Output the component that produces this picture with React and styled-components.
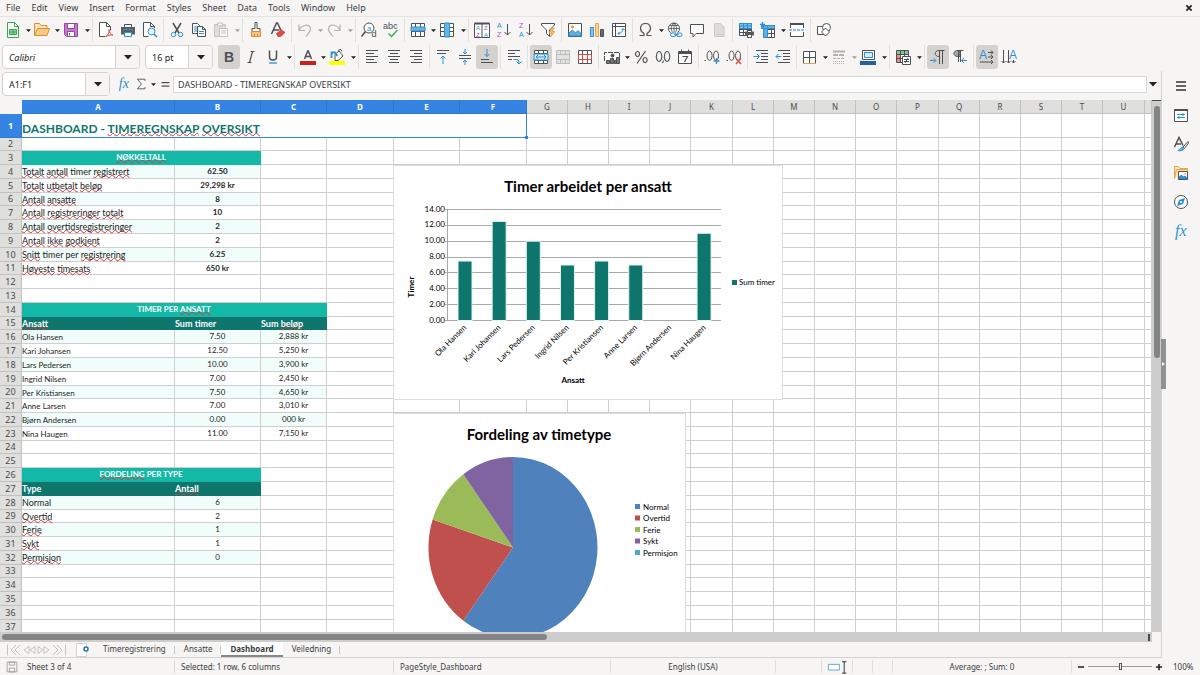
import React from 'react';
import styled, { css, createGlobalStyle } from 'styled-components';

const c = {
  chrome: '#f6f5f4',
  line: '#d5d2cf',
  text: '#3a3d3f',
  ink: '#4d5054',
  blue: '#3584e4',
  sky: '#2f8fd0',
  orange: '#eba34a',
  red: '#dd4a45',
  green: '#3aa757',
  purple: '#b44ac0',
  grid: '#cfcfcf',
  teal: '#0f766e',
  tealLight: '#14b8a6',
  mint: '#f0fdfa',
};

const ui = `'Noto Sans', 'Open Sans', sans-serif`;
const cellFont = `Lato, 'Noto Sans', sans-serif`;

const GlobalStyle = createGlobalStyle`
  * { box-sizing: border-box; }
  body {
    margin: 0;
    font-family: ${ui};
    font-size: 9px;
    color: ${c.text};
    background: ${c.chrome};
    overflow: hidden;
  }
  button, input {
    font: inherit;
    color: inherit;
    margin: 0;
    padding: 0;
    border: none;
    background: none;
  }
`;

const Window = styled.div`
  display: flex;
  flex-direction: column;
  height: 100vh;
`;

const MenuBar = styled.nav`
  display: flex;
  align-items: center;
  gap: 11px;
  height: 17px;
  flex: none;
  padding: 0 4px 0 6px;
  border-bottom: 1px solid #e6e4e2;
`;

const MenuItem = styled.button`
  line-height: 14px;
`;

const CloseButton = styled.button`
  display: flex;
  margin-left: auto;
`;

const Toolbar = styled.div`
  display: flex;
  align-items: center;
  height: 27px;
  flex: none;
  padding: 0 0 1px 2px;
`;

const Group = styled.div`
  display: flex;
  align-items: center;
  height: 24px;
  &:not(:last-child) {
    border-right: 1px solid #e3e1de;
    padding-right: 2px;
    margin-right: 2px;
  }
`;

const Tool = styled.button`
  display: flex;
  align-items: center;
  justify-content: center;
  width: 22px;
  height: 24px;
  border-radius: 3px;
  background: ${p => (p.$on ? '#d5d1cd' : 'transparent')};
  opacity: ${p => (p.$off ? 0.4 : 1)};
`;

const Drop = styled.button`
  display: flex;
  align-items: center;
  justify-content: flex-end;
  width: 7px;
  height: 24px;
  opacity: ${p => (p.$off ? 0.4 : 1)};
  &:last-child {
    width: 8px;
  }
`;

const Combo = styled.div`
  display: flex;
  width: ${p => p.$w}px;
  height: 24px;
  flex: none;
  margin-right: 5px;
  border: 1px solid ${c.line};
  border-radius: 4px;
  background: #fff;
  overflow: hidden;
`;

const ComboInput = styled.input`
  flex: 1;
  min-width: 0;
  padding-left: 6px;
  color: #222;
  font-style: ${p => (p.$italic ? 'italic' : 'normal')};
`;

const ComboButton = styled.button`
  display: flex;
  align-items: center;
  justify-content: center;
  width: 24px;
  border-left: 1px solid ${c.line};
  background: ${c.chrome};
`;

const Middle = styled.div`
  display: flex;
  flex: 1;
  min-height: 0;
`;

const Work = styled.main`
  display: flex;
  flex-direction: column;
  flex: 1;
  min-width: 0;
`;

const FormulaBar = styled.div`
  display: flex;
  align-items: center;
  height: 29px;
  flex: none;
  padding: 0 4px 3px 2px;
`;

const FormulaTool = styled(Tool)`
  width: 17px;
`;

const FormulaInput = styled.input`
  flex: 1;
  min-width: 0;
  height: 17px;
  padding-left: 4px;
  border: 1px solid #d8d6d4;
  background: #fff;
`;

const FormulaDrop = styled(Drop)`
  &&& {
    width: 10px;
  }
`;

const SheetArea = styled.div`
  display: flex;
  flex: 1;
  min-height: 0;
`;

const SheetView = styled.div`
  position: relative;
  flex: 1;
  min-width: 0;
  overflow: hidden;
  background: #fff;
`;

const Sheet = styled.table`
  width: 100%;
  table-layout: fixed;
  border-collapse: separate;
  border-spacing: 0;
  font-family: ${cellFont};
  font-size: 8px;
  color: #1c1c1c;
`;

const ColHead = styled.th`
  height: 14px;
  padding: 0;
  font: ${p => (p.$on ? 'bold' : 'normal')} 8px/13px ${ui};
  color: ${p => (p.$on ? '#fff' : '#4a4a4a')};
  background: ${p => (p.$on ? c.blue : '#dfdfde')};
  border-right: 1px solid ${p => (p.$on ? '#2f76cd' : '#c2c2c2')};
  border-bottom: 1px solid ${p => (p.$on ? '#2f76cd' : '#c2c2c2')};
`;

const Corner = styled.td`
  padding: 0;
  background: ${c.chrome};
`;

const RowHead = styled(ColHead)`
  height: auto;
  font-size: 9px;
  line-height: 12px;
`;

const Cell = styled.td`
  padding: 0;
  border-right: 1px solid ${c.grid};
  border-bottom: 1px solid ${c.grid};
  vertical-align: top;
  white-space: nowrap;
  ${p => p.$alt && css`
    background: ${c.mint};
  `}
  ${p => p.$head && css`
    color: #fff;
    font-weight: bold;
    background: ${p.$head};
    border-color: ${p.$head};
  `}
  ${p => p.$active && css`
    border-color: ${c.blue};
    vertical-align: bottom;
  `}
`;

const CellText = styled.div`
  height: 12px;
  line-height: ${p => (p.$center ? 12 : 14)}px;
  text-align: ${p => (p.$center ? 'center' : 'left')};
  font-size: ${p => (p.$large ? 9 : 8)}px;
  font-weight: ${p => (p.$bold ? 'bold' : 'inherit')};
`;

const SheetTitle = styled.div`
  line-height: 17px;
  font-size: 12px;
  font-weight: bold;
  color: ${c.teal};
`;

const Typo = styled.span`
  text-decoration: underline wavy #d8343a 1px;
  text-decoration-skip-ink: none;
  text-underline-offset: -1px;
`;

const FillHandle = styled.span`
  position: absolute;
  top: 36px;
  left: 525px;
  width: 3px;
  height: 3px;
  background: ${c.blue};
`;

const ChartFrame = styled.figure`
  position: absolute;
  left: 393px;
  top: ${p => p.$top}px;
  margin: 0;
  border: 1px solid #dcdcdc;
  background: #fff;
  svg {
    display: block;
    font-family: ${cellFont};
    font-size: 8px;
  }
`;

const VScroll = styled.div`
  width: 9px;
  flex: none;
  padding: 5px 1px 0 2px;
  border-top: 1px solid #4a4a4a;
  background: #cdcdcd;
`;

const VThumb = styled.div`
  height: 48%;
  border-radius: 3px;
  background: #838584;
`;

const HScroll = styled.div`
  height: 10px;
  flex: none;
  margin-right: 9px;
  padding: 2px 0 2px 2px;
  background: #cdcdcd linear-gradient(#4a4a4a, #4a4a4a) right 2px center / 2px 7px no-repeat;
`;

const HThumb = styled(VThumb)`
  width: calc(47% + 4px);
  height: 6px;
`;

const Tabs = styled.div`
  display: flex;
  align-items: stretch;
  height: 16px;
  flex: none;
  padding-left: 6px;
  border-bottom: 1px solid ${c.line};
`;

const TabNav = styled.button`
  display: flex;
  align-items: center;
  width: 15px;
  color: #c6c4c1;
`;

const AddTab = styled.button`
  display: flex;
  align-items: center;
  margin: 0 4px 0 8px;
`;

const Tab = styled.button`
  position: relative;
  padding: 0 9px;
  line-height: 13px;
  font-size: 8px;
  ${p => p.$on ? css`
    font-weight: bold;
    background: #fff;
    border-bottom: 2px solid #85888a;
  ` : css`
    border-bottom: 2px solid transparent;
    background: linear-gradient(#c9c6c3, #c9c6c3) right 4px / 1px 8px no-repeat;
  `}
`;

const Sidebar = styled.aside`
  position: relative;
  display: flex;
  flex-direction: column;
  align-items: center;
  width: 39px;
  flex: none;
  border-left: 1px solid ${c.line};
`;

const SideButton = styled(Tool)`
  height: 29px;
`;

const SideHandle = styled.button`
  position: absolute;
  left: -1px;
  top: 268px;
  display: flex;
  align-items: center;
  width: 5px;
  height: 50px;
  background: #929292;
`;

const StatusBar = styled.footer`
  display: grid;
  grid-template-columns: 24px 150fr 219fr 217fr 165fr 46fr 31px 20px 20px 179fr 129px;
  align-items: center;
  height: 17px;
  flex: none;
`;

const StatusCell = styled.div`
  display: flex;
  align-items: center;
  justify-content: ${p => (p.$center ? 'center' : 'flex-start')};
  height: 13px;
  padding-left: ${p => p.$pad || 0}px;
  border-left: ${p => (p.$bare ? 'none' : '1px solid #e0dedb')};
  font-size: 8px;
  white-space: nowrap;
`;

const ZoomSlider = styled.input.attrs({ type: 'range' })`
  appearance: none;
  flex: 1;
  min-width: 0;
  height: 9px;
  margin: 0 2px;
  background: linear-gradient(#9a9a9a, #9a9a9a) center / 100% 1px no-repeat;
  &::-webkit-slider-thumb {
    appearance: none;
    width: 3px;
    height: 7px;
    border: 1px solid #55585a;
    background: #eee;
  }
`;

const ZoomValue = styled.span`
  width: 36px;
  padding-left: 9px;
`;

const Svg = styled.svg`
  display: block;
  flex: none;
  overflow: visible;
`;

const k = c.ink;
const s = c.sky;

const lines = (rows, color = k) =>
  rows.map(([x1, x2, y]) => <path key={y} d={`M${x1} ${y}H${x2}`} stroke={color} />);

const Letter = ({ x, y, size = 8, fill = s, children, ...rest }) => (
  <text x={x} y={y} fontSize={size} fill={fill} stroke="none" fontFamily="'Liberation Sans', sans-serif" {...rest}>
    {children}
  </text>
);

const gridLines = 'M1.5 1.5h13v13h-13zM1.5 5.5h13M1.5 9.5h13M5.5 1.5v13M10.5 1.5v13';

const icons = {
  new: (
    <g stroke={c.green}>
      <path d="M2.500 .5h7l4 4v11h-11z" fill="#fff" />
      <path d="M9.500.5v4h4" />
      <path d="M4.500 7.500h7v5h-7z" fill="#8fd19e" />
      <path d="M4.500 10h7M8 7.500v5" />
    </g>
  ),
  open: (
    <g stroke="#d98f33">
      <path d="M.5 13.500v-12h5l1.500 2h6v3" fill="#fbe3bd" />
      <path d="M.5 13.500l3-7h12l-2.500 7z" fill="#fac983" />
    </g>
  ),
  save: (
    <g stroke="#93489b">
      <path d="M1.500 1.500h13v13h-11l-2-2z" fill="#c678cf" />
      <path d="M4.500 1.500h7v5h-7z" fill="#fff" />
      <path d="M4.500 9.500h7v5h-7z" fill="#fff" />
      <path d="M6.500 11v2.500" />
    </g>
  ),
  pdf: (
    <g stroke={k}>
      <path d="M12.500 8.500V4.500l-4-4h-7v14h6" fill="#fff" />
      <path d="M8.500.5v4h4" />
      <path d="M8 14.500c2.500-2 3.500-4.500 3-7 .5 3.500 1.500 5 4 5.500-3-.3-5 .3-7 1.500z" stroke={c.red} />
    </g>
  ),
  print: (
    <g stroke={k}>
      <path d="M4.500 5V2.500h7V5" fill="#fff" />
      <path d="M1 5h14v7.500H1z" fill="#5a5d61" stroke="none" />
      <path d="M3 7.500h10" stroke={s} />
      <path d="M4.500 10.500h7v4h-7z" fill="#fff" stroke={s} />
    </g>
  ),
  preview: (
    <g stroke={k}>
      <path d="M12.500 6V4.500l-4-4h-7v14h5" fill="#fff" />
      <path d="M8.500.5v4h4" />
      <circle cx="9.500" cy="9.500" r="3.500" stroke={s} fill="#e6f3fb" />
      <path d="M12 12l3 3" stroke={s} strokeWidth="1.500" />
    </g>
  ),
  cut: (
    <g stroke={k}>
      <path d="M4 1l6 10M12 1L6 11" strokeWidth="1.500" />
      <circle cx="4.500" cy="12.500" r="2.200" stroke={s} />
      <circle cx="11.500" cy="12.500" r="2.200" stroke={s} />
    </g>
  ),
  copy: (
    <g stroke={k}>
      <path d="M1.500 1.500h5l2 2v8h-7z" fill="#fff" />
      <path d="M6.500 4.500h5l3 3v7h-8z" fill="#fff" />
      <path d="M11.500 4.500v3h3" />
      <path d="M3 5h3M3 7h3M3 9h3M8 9.500h5M8 11.500h5" stroke={s} />
    </g>
  ),
  paste: (
    <g stroke="#77797b">
      <path d="M1.500 2.500h11v12h-11z" fill="#bbb" />
      <path d="M4.500 1h5v3h-5z" fill="#eee" />
      <path d="M6.500 6.500h8v8h-8z" fill="#fff" />
      <path d="M8 9h5M8 11h5" />
    </g>
  ),
  clone: (
    <g stroke={k}>
      <path d="M7 .5h2v6h3v3H4v-3h3z" fill="#fff" />
      <path d="M3.500 9.500h9v5h-9z" fill="#fbc27a" stroke="#dd8f34" />
      <path d="M6.500 12v2.500M9.500 12v2.500" stroke="#dd8f34" />
    </g>
  ),
  clear: (
    <g stroke={k}>
      <path d="M1.500 12L6.500 1h1l3.500 7.500M3.500 8h6" strokeWidth="1.500" />
      <path d="M6.500 11.500l5-3.500 3.500 2.500-4.500 4H8z" fill={c.red} stroke={c.red} />
    </g>
  ),
  undo: <path d="M2 2.500v6h6M2 8.500C4 2.500 13.500 1 13.500 7c0 3-2.500 5-4.500 7.500" stroke={k} strokeWidth="1.200" />,
  redo: <path d="M14 2.500v6H8M14 8.500C12 2.500 2.500 1 2.500 7c0 3 2.500 5 4.500 7.500" stroke={k} strokeWidth="1.200" />,
  find: (
    <g stroke={k}>
      <circle cx="8" cy="6" r="5" fill="#fff" />
      <path d="M4.500 9.500L.5 14.500" strokeWidth="1.500" />
      <Letter x="6" y="8.500" size={8}>a</Letter>
      <Letter x="10.500" y="15" size={9} fill={k}>d</Letter>
    </g>
  ),
  spell: (
    <g>
      <Letter x="0" y="7" size={9} fill={k}>abc</Letter>
      <path d="M5.500 11.500l3 3 6-6.500" stroke={c.green} strokeWidth="1.300" />
    </g>
  ),
  row: (
    <g stroke={k}>
      <path d={gridLines} fill="#fff" />
      <path d="M1 5h14v4H1z" fill="#66b4e4" stroke={s} />
    </g>
  ),
  column: (
    <g stroke={k}>
      <path d={gridLines} fill="#fff" />
      <path d="M5.500 1h5v14h-5z" fill="#66b4e4" stroke={s} />
    </g>
  ),
  sort: (
    <g stroke={k}>
      <path d="M.5 1.500h15v14H.5zM8 1.500v14" fill="#fff" />
      <path d="M.5 1.500h15" strokeWidth="2" />
      <Letter x="2" y="8" size={6}>A</Letter>
      <Letter x="2" y="15" size={6} fill={c.purple}>Z</Letter>
      <Letter x="10" y="8" size={6} fill={c.purple}>Z</Letter>
      <Letter x="10" y="15" size={6}>A</Letter>
    </g>
  ),
  asc: (
    <g stroke={k}>
      <Letter x="1" y="6" size={7}>A</Letter>
      <Letter x="1" y="15" size={7} fill={c.purple}>Z</Letter>
      <path d="M11.500 2v11M8.500 10l3 3 3-3" />
    </g>
  ),
  desc: (
    <g stroke={k}>
      <Letter x="1" y="6" size={7} fill={c.purple}>Z</Letter>
      <Letter x="1" y="15" size={7}>A</Letter>
      <path d="M11.500 2v11M8.500 10l3 3 3-3" />
    </g>
  ),
  filter: (
    <g stroke={k}>
      <path d="M1.500 1.500h13v1.500L9.500 8v6.500l-3-3V8l-5-5z" fill="#fff" />
      <path d="M12 6l-3 5h3l-1.500 4 4-5.500h-2.500L14 6z" fill="#fbc27a" stroke={c.orange} />
    </g>
  ),
  image: (
    <g stroke={k}>
      <path d="M1.500 1.500h13v13h-13z" fill="#fff" />
      <path d="M2 14v-3l3.500-3 3 3 2.500-2.500 3 3V14z" fill="#5fb0e2" stroke={s} />
      <circle cx="5.500" cy="5" r="1.200" fill={c.orange} stroke={c.orange} />
    </g>
  ),
  chart: (
    <g>
      <path d="M1.500 5.500h3v9h-3z" fill="#8dc6ec" stroke={s} />
      <path d="M6.500 1.500h3v13h-3z" fill="#fbd49b" stroke={c.orange} />
      <path d="M11.500 7.500h3v7h-3z" fill="#66696c" stroke={k} />
    </g>
  ),
  pivot: (
    <g stroke={k}>
      <path d="M1.500 1.500h13v13h-13zM1.500 4.500h13M4.500 1.500v13" fill="#fff" />
      <path d="M7 11.500c3 0 5-2 5-5M10.500 8L12 6.500 13.500 8M8.500 10L7 11.500 8.500 13" stroke={s} />
    </g>
  ),
  omega: <path d="M1.500 13.500h4.500v-2C3.500 10 2.500 8 2.500 6.500c0-3 2-5 5-5s5 2 5 5c0 1.500-1 3.500-3.500 5v2h4.500" stroke={k} strokeWidth="1.200" />,
  link: (
    <g stroke={k}>
      <circle cx="7" cy="6.500" r="5.500" fill="#fff" />
      <path d="M1.500 6.500h11M7 1v11M3 3.500h8M7 1C3.500 4 3.500 9 7 12M7 1c3.500 3 3.500 8 0 11" strokeWidth=".8" />
      <path d="M3.500 10.500h12v5h-12z" fill={c.chrome} stroke="none" />
      <rect x="3.500" y="11" width="5.500" height="3.500" rx="1.700" stroke={s} />
      <rect x="9.500" y="11" width="5.500" height="3.500" rx="1.700" stroke={s} />
      <path d="M7 12.700h5" stroke={s} />
    </g>
  ),
  comment: <path d="M1.500 2.500h13v9H7l-3 3.500v-3.500H1.500z" fill="#fff" stroke={k} />,
  footer: (
    <g stroke="#8a8c8e">
      <path d="M3.500 1.500h6l3.500 3.500v9.500H3.500z" fill="#b8b8b8" />
      <path d="M5 12.500h6" />
    </g>
  ),
  printArea: (
    <g stroke={k}>
      <path d="M1.500 1.500h12v12h-12zM1.500 7.500h12M1.500 10.500h12M5.500 1.500v12M9.500 1.500v12" fill="#fff" />
      <path d="M1.500 1.500h12v5h-12zM5.500 1.500v5M9.500 1.500v5M1.500 4h12" fill="#7cc0ea" stroke={s} />
      <path d="M7 9.500h9v4H7z" fill="#5a5d61" stroke="none" />
      <path d="M9.500 8.500h4v2h-4zM9.500 12.500h4v3h-4z" fill="#fff" />
    </g>
  ),
  freeze: (
    <g stroke={k}>
      <path d="M3.500 3.500h11v12h-11zM3.500 7.500h11M3.500 11.500h11M7.500 3.500v12M11.500 3.500v12" fill="#fff" />
      <path d="M1.500 3.500h13v3h-13zM3.500 3.500h4v12h-4z" fill="#5fb0e2" stroke={s} />
      <path d="M2.500 0v5M0 2.500h5" stroke={s} strokeWidth="1.500" />
    </g>
  ),
  split: (
    <g stroke={k}>
      <path d="M1.500 6V1.500h13V6M1.500 10v4.500h13V10" fill="#fff" />
      <path d="M1 2h14" strokeWidth="2" />
      <path d="M0 8h16" stroke={s} strokeDasharray="3 1" />
    </g>
  ),
  draw: (
    <g stroke={k}>
      <path d="M1.500 4.500h8v8h-8z" fill="#fff" />
      <circle cx="10.500" cy="5.500" r="4" fill="#fff" />
      <path d="M9.500 6l4 4-4 4-4-4z" fill="#fff" />
    </g>
  ),
  bold: <Letter x="3" y="13" size={14} fill={k} fontWeight="bold">B</Letter>,
  italic: <path d="M7.500 2.500h4M4.500 13.500h4M9.500 2.500L6.500 13.500" stroke={k} strokeWidth="1.200" />,
  underline: (
    <g stroke={k}>
      <path d="M4.500 1.500V8c0 4 7 4 7 0V1.500" strokeWidth="1.500" />
      <path d="M4 14h8" stroke={s} strokeWidth="1.300" />
    </g>
  ),
  fontColor: (
    <g>
      <path d="M4.500 10L7.700 2h.6L11.500 10M5.500 7.500h5" stroke={k} strokeWidth="1.500" />
      <path d="M0 12h16v4H0z" fill="#c9211e" />
    </g>
  ),
  highlight: (
    <g>
      <path d="M6 5.500L10 2l4 5-5 4.500H6z" fill="#fff" stroke={k} />
      <path d="M2.500 9V3.500H6L8.500 7" stroke={s} strokeWidth="1.800" />
      <path d="M9 1.500l3-1 1 2" stroke={k} />
      <path d="M0 12h16v4H0z" fill="#ffff00" />
    </g>
  ),
  left: lines([[2, 14, 1.5], [2, 10, 4.5], [2, 14, 7.5], [2, 10, 10.5], [2, 13, 13.5]]),
  center: lines([[2, 14, 1.5], [4, 12, 4.5], [2, 14, 7.5], [4, 12, 10.5], [3, 13, 13.5]]),
  right: lines([[2, 14, 1.5], [6, 14, 4.5], [2, 14, 7.5], [6, 14, 10.5], [3, 14, 13.5]]),
  top: (
    <g>
      {lines([[2, 14, 1.5], [2, 11, 4.5]])}
      <path d="M8 15V7M5.500 9.500L8 7l2.500 2.500" stroke={s} />
    </g>
  ),
  middle: (
    <g>
      {lines([[2, 14, 6.5], [2, 14, 9.5]])}
      <path d="M8 0v4.500M6 3l2 2 2-2M8 16v-4.500M6 13l2-2 2 2" stroke={s} />
    </g>
  ),
  bottom: (
    <g>
      {lines([[2, 10, 10.5], [2, 14, 13.5]])}
      <path d="M8 0v7.500M5.500 5L8 7.500 10.500 5" stroke={s} />
    </g>
  ),
  wrap: (
    <g>
      {lines([[2, 14, 1.5], [2, 9, 4.5], [2, 14, 7.5], [2, 6, 10.5]])}
      <path d="M7.500 10.500h3.500c2 0 2 3 2 4M10.500 12.500l2.500 2.500 2.500-2.500" stroke={s} />
    </g>
  ),
  merge: (
    <g stroke={k}>
      <path d="M1.500 1.500h13v13h-13zM1.500 4.500h13M1.500 11.500h13M5.500 1.500v3M10.500 1.500v3M5.500 11.500v3M10.500 11.500v3" fill="#fff" />
      <path d="M1 5h14v6H1z" fill="#d7ecf9" stroke={s} />
      <path d="M3 8h10M5 6L3 8l2 2M11 6l2 2-2 2" stroke={s} />
    </g>
  ),
  unmerge: (
    <g stroke="#6a6c6e">
      <path d="M1.500 1.500h13v13h-13zM1.500 5.500h13M1.500 10.500h13M5.500 1.500v4M10.500 1.500v4M5.500 10.500v4M10.500 10.500v4" fill="#c4c4c4" />
    </g>
  ),
  splitCells: (
    <g stroke={k}>
      <path d="M1.500 1.500h13v13h-13zM5.500 1.500v13M10.500 1.500v13" fill="#fff" />
      <path d="M1.500 5.500h13v5h-13zM5.500 5.500v5M10.500 5.500v5M5.500 11v3M10.500 11v3" stroke={c.red} />
    </g>
  ),
  currency: (
    <g stroke={k}>
      <path d="M.5 12V3.500h15v5" fill="#fff" strokeDasharray="5 1" />
      <circle cx="8.500" cy="6.500" r="1.500" fill={k} />
      <path d="M2.500 11.500h3v3h-3zM6.500 9.500h3v5h-3zM10.500 11.500h2v3h-2zM12.500 8.500h3v6h-3z" fill="#77797b" />
    </g>
  ),
  percent: <path d="M12.500 2L4 14.500M4.500 2.500a2 2.500 0 1 0 .1 0zM12 8.500a2 2.500 0 1 0 .1 0z" stroke={k} strokeWidth="1.200" />,
  number: <path d="M4 2.500a2.700 5 0 1 0 .1 0zM12 2.500a2.700 5 0 1 0 .1 0zM8.500 11.500l-1 2.500" stroke={k} strokeWidth="1.100" />,
  date: (
    <g stroke={k}>
      <path d="M1.500 2.500h13v12h-13z" fill="#fff" />
      <path d="M1.500 4h13" strokeWidth="2" />
      <path d="M4.500.5v3M11.500.5v3" />
      <path d="M5.500 7.500h5L7.500 13" strokeWidth="1.200" />
    </g>
  ),
  addDecimal: (
    <g stroke={k}>
      <path d="M.5 11.500h1.500M5.500 2a2.500 4.700 0 1 0 .1 0zM12 2a2.500 4.700 0 1 0 .1 0z" />
      <path d="M12.500 9v6M9.500 12h6" stroke={s} strokeWidth="1.300" />
    </g>
  ),
  delDecimal: (
    <g stroke={k}>
      <path d="M.5 11.500h1.500M5.500 2a2.500 4.700 0 1 0 .1 0zM12 2a2.500 4.700 0 1 0 .1 0z" />
      <path d="M10 9.500l5 5.500M15 9.500L10 15" stroke={c.red} strokeWidth="1.300" />
    </g>
  ),
  indent: (
    <g>
      {lines([[3, 15, 1.5], [8, 15, 4.5], [8, 15, 7.5], [8, 15, 10.5], [3, 15, 13.5]])}
      <path d="M.5 7.500h5.500M4 5l2.500 2.500L4 10" stroke={s} />
    </g>
  ),
  outdent: (
    <g>
      {lines([[3, 15, 1.5], [8, 15, 4.5], [8, 15, 7.5], [8, 15, 10.5], [3, 15, 13.5]])}
      <path d="M6.500 7.500H1M3.500 5L1 7.500 3.500 10" stroke={s} />
    </g>
  ),
  border: (
    <g stroke={k}>
      <path d="M1.500 2.500h12v12h-12zM7.500 2.500v12M1.500 8.500h12" fill="#fff" />
      <path d="M1 14.500h13" stroke={c.orange} />
    </g>
  ),
  lineStyle: (
    <g stroke={k}>
      <path d="M2 2.500h12" strokeWidth="2" />
      <path d="M2 6h12" strokeWidth="2" strokeDasharray="5 1" />
      <path d="M2 9.500h12" strokeDasharray="3 1" />
      <path d="M2 12.500h12M2 14.500h12" strokeDasharray="1 1" />
    </g>
  ),
  borderColor: (
    <g>
      <path d="M2.500 1.500h12v9h-12z" fill="#fff" stroke={k} />
      <path d="M4.500 3.500h8v5h-8z" stroke={s} fill="#d7ecf9" />
      <path d="M0 12h16v4H0z" fill="#2a6099" />
    </g>
  ),
  conditional: (
    <g stroke={k}>
      <path d="M1.500 1.500h12v12h-12z" fill="#fff" />
      <path d="M2 2h11v3H2z" fill="#7fca8e" stroke="none" />
      <path d="M2 6h4v7H2z" fill="#ee8b86" stroke="none" />
      <path d="M1.500 5.500h12M1.500 9.500h12M5.500 1.500v12M9.500 1.500v12" />
      <path d="M7.500 7.500h8v8h-8z" fill="#fff" />
      <path d="M9 10.500h5M9 12.500h5M13 9l-3 5" />
    </g>
  ),
  ltr: (
    <g stroke={k}>
      <path d="M9.500 15V1.500M12.500 15V1.500M14.500 1.500H9c-5 0-5 6 0 6" />
      <path d="M0 11.500h5.500M3.500 9L6 11.500 3.500 14" stroke={s} />
    </g>
  ),
  rtl: (
    <g stroke={k}>
      <path d="M6 1.500c-5.500 0-5.500 6 0 6h2v-6z" fill="#aaa" />
      <path d="M6.500 13V1.500M8.500 13V1.500M11.500 1.500H6" />
      <path d="M15 11.500H9.500M12 9L9.500 11.500 12 14" stroke={s} />
    </g>
  ),
  horizontal: (
    <g stroke={k}>
      <Letter x="0" y="10" size={12}>A</Letter>
      <path d="M9 3.500h5M12 1.500l2 2-2 2M9 8h5M12 6l2 2-2 2M1 13h13M12 11l2 2-2 2" />
    </g>
  ),
  vertical: (
    <g stroke={k}>
      <Letter x="8" y="10" size={12}>A</Letter>
      <path d="M2.500 1v13M.5 12l2 2 2-2M7.500 1v13M5.500 12l2 2 2-2M12.500 11v3M10.500 12l2 2 2-2" />
    </g>
  ),
  menu: <path d="M3 4h10M3 8h10M3 12h10" stroke="#333" strokeWidth="1.500" />,
  properties: (
    <g stroke={k}>
      <path d="M1.500 2.500h13v12h-13z" fill="#fff" />
      <path d="M1 3h14" strokeWidth="2" />
      <path d="M4 7.500h8M10 6v3M4 10.500h8M6 9v3" stroke={s} />
    </g>
  ),
  styles: (
    <g>
      <path d="M1.500 11L6 1.500l4 8M3 8h5" stroke={k} strokeWidth="1.500" />
      <path d="M15 5.500l-5 5.500 1.500 1.500L15.500 7z" fill="#fff" stroke={k} />
      <path d="M5 14.500c2 .5 5 .5 6-2l-1.500-1.500C7.500 11.500 8 13.500 5 14.500z" fill="#5fb0e2" stroke={s} />
    </g>
  ),
  gallery: (
    <g>
      <path d="M1.500 13.500v-12h4l1.500 2h7.500v3" stroke={c.orange} fill="#fbe3bd" />
      <path d="M1.500 13.500l2-9h11" stroke={c.orange} />
      <path d="M5.500 6.500h9v8h-9z" fill="#fff" stroke={k} />
      <path d="M6 14v-2.500L8.500 9.500l2 2 1.500-1 2 2V14z" fill={s} />
      <path d="M11.500 8h1.500v1.500h-1.500z" fill={c.orange} />
    </g>
  ),
  navigator: (
    <g>
      <circle cx="8" cy="8" r="6.500" fill="#fff" stroke={k} />
      <path d="M12 4L10 10 4 12l2-6z" fill={s} />
      <circle cx="8" cy="8" r="1" fill="#fff" />
    </g>
  ),
  fx: <Letter x="2" y="13" size={16} fontStyle="italic" fontFamily="'Liberation Serif', serif">fx</Letter>,
  sum: <path d="M12.500 4.500V2.500H4L8.500 8 4 13.500h8.500v-2" stroke={k} />,
  equals: <path d="M4 6.500h9M4 10.500h9" stroke={k} strokeWidth="1.500" />,
  close: <path d="M5 5l6 6M11 5l-6 6" stroke="#222" strokeWidth="2" />,
  first: <path d="M1.500 2.500v11M10 3L5 8l5 5M14 3L9 8l5 5" stroke="currentColor" />,
  prev: <path d="M8 4.500v7L3 8zM14 4.500v7L9 8z" stroke="currentColor" />,
  next: <path d="M2 4.500v7L7 8zM8 4.500v7L13 8z" stroke="currentColor" />,
  last: <path d="M14.500 2.500v11M6 3l5 5-5 5M2 3l5 5-5 5" stroke="currentColor" />,
  addSheet: (
    <g>
      <path d="M2.500 1.500h10v13h-10z" fill="#fff" stroke="#d5d2cf" />
      <circle cx="12" cy="7" r="2" fill="#fff" stroke="#2a6fb0" strokeWidth="1.500" />
    </g>
  ),
  saved: (
    <g stroke="#8f9193">
      <path d="M1.500 1.500h13v13h-13zM4.500 1.500h7v4h-7zM4.500 9.500h7v5h-7z" />
    </g>
  ),
  selection: (
    <g>
      <path d="M.5 5h12.500v6.500H.5z" fill="#fff" stroke="#4ba3cf" />
    </g>
  ),
  ibeam: <path d="M0 2h5M0 15h5M2.500 2v13" stroke="#222" />,
  minus: <path d="M3 8h10" stroke="#222" strokeWidth="2.500" />,
  plus: <path d="M3 8h10M8 3v10" stroke="#222" strokeWidth="2.500" />,
};

const Icon = ({ name, size = 16 }) => (
  <Svg width={size} height={size} viewBox="0 0 16 16" fill="none" aria-hidden="true">
    {icons[name]}
  </Svg>
);

const Caret = ({ size = 5 }) => (
  <Svg width={size} height={size} viewBox="0 0 8 8" aria-hidden="true">
    <path d="M0 2h8L4 6.500z" fill="#222" />
  </Svg>
);

// "+" marks a drop-down, "-" a disabled tool and "*" one that is switched on
const standardTools = [
  ['new+', 'open+', 'save+'],
  ['pdf', 'print', 'preview'],
  ['cut', 'copy', '-paste+'],
  ['clone', 'clear'],
  ['-undo+', '-redo+'],
  ['find', 'spell'],
  ['row+', 'column+'],
  ['sort', 'asc', 'desc', 'filter'],
  ['image', 'chart', 'pivot'],
  ['omega+', 'link', 'comment', '-footer'],
  ['printArea', 'freeze+', 'split'],
  ['draw'],
];

const formatTools = [
  ['*bold', 'italic', 'underline+'],
  ['fontColor+', 'highlight+'],
  ['left', 'center', 'right'],
  ['top', 'middle', '*bottom'],
  ['wrap'],
  ['*merge', '-unmerge', 'splitCells'],
  ['currency+', 'percent', 'number', 'date'],
  ['addDecimal', 'delDecimal'],
  ['indent', 'outdent'],
  ['border+', '-lineStyle+', 'borderColor+'],
  ['conditional+'],
  ['*ltr', 'rtl'],
  ['*horizontal', 'vertical'],
];

const ToolGroups = ({ groups }) =>
  groups.map((group, i) => (
    <Group key={i}>
      {group.map(entry => {
        const name = entry.replace(/[-+*]/g, '');
        const off = entry.startsWith('-');
        return (
          <React.Fragment key={name}>
            <Tool $on={entry.startsWith('*')} $off={off} aria-label={name}>
              <Icon name={name} />
            </Tool>
            {entry.endsWith('+') && (
              <Drop $off={off} aria-label={`${name} options`}>
                <Caret />
              </Drop>
            )}
          </React.Fragment>
        );
      })}
    </Group>
  ));

const ComboBox = ({ label, value, width, italic }) => (
  <Combo $w={width}>
    <ComboInput aria-label={label} defaultValue={value} $italic={italic} />
    <ComboButton aria-label={`${label} list`}>
      <Caret size={8} />
    </ComboButton>
  </Combo>
);

// words that start with "~" are unknown to the spell checker
const Words = ({ text }) =>
  text.split(' ').map((word, i) => (
    <React.Fragment key={i}>
      {i > 0 && ' '}
      {word[0] === '~' ? <Typo>{word.slice(1)}</Typo> : word}
    </React.Fragment>
  ));

const rows = {
  3: { title: '~NØKKELTALL', span: 2 },
  4: { cells: ['~Totalt ~antall timer ~registrert', '62.50'], bold: true },
  5: { cells: ['~Totalt ~utbetalt ~beløp', '29,298 kr'], bold: true },
  6: { cells: ['~Antall ~ansatte', '8'], bold: true },
  7: { cells: ['~Antall ~registreringer ~totalt', '10'], bold: true },
  8: { cells: ['~Antall ~overtidsregistreringer', '2'], bold: true },
  9: { cells: ['~Antall ~ikke ~godkjent', '2'], bold: true },
  10: { cells: ['~Snitt timer per ~registrering', '6.25'], bold: true },
  11: { cells: ['~Høyeste ~timesats', '650 kr'], bold: true },
  14: { title: 'TIMER PER ~ANSATT', span: 3 },
  15: { labels: ['~Ansatt', 'Sum timer', 'Sum ~beløp'] },
  16: { cells: ['Ola Hansen', '7.50', '2,888 kr'] },
  17: { cells: ['Kari Johansen', '12.50', '5,250 kr'] },
  18: { cells: ['Lars Pedersen', '10.00', '3,900 kr'] },
  19: { cells: ['Ingrid Nilsen', '7.00', '2,450 kr'] },
  20: { cells: ['Per Kristiansen', '7.50', '4,650 kr'] },
  21: { cells: ['Anne Larsen', '7.00', '3,010 kr'] },
  22: { cells: ['Bjørn Andersen', '0.00', '000 kr'] },
  23: { cells: ['Nina Haugen', '11.00', '7,150 kr'] },
  26: { title: '~FORDELING PER TYPE', span: 2 },
  27: { labels: ['Type', '~Antall'] },
  28: { cells: ['Normal', '6'] },
  29: { cells: ['~Overtid', '2'] },
  30: { cells: ['~Ferie', '1'] },
  31: { cells: ['~Sykt', '1'] },
  32: { cells: ['~Permisjon', '0'] },
};

const letters = 'ABCDEFGHIJKLMNOPQRSTU'.split('');
const wide = [153, 86, 66, 67, 66, 67];
const step = (n, size) => Math.floor(n * size) - Math.floor((n - 1) * size);
const columnWidth = i => wide[i] || step(i - 5, 41.21);
const rowHeight = n => (n === 1 ? 24 : step(n - 1, 13.78));

const SheetRow = ({ n }) => {
  const row = rows[n] || {};
  let used = 0;
  let content = null;
  if (n === 1) {
    used = 6;
    content = (
      <Cell colSpan={6} $active>
        <SheetTitle>
          <Words text="DASHBOARD - ~TIMEREGNSKAP ~OVERSIKT" />
        </SheetTitle>
      </Cell>
    );
  } else if (row.title) {
    used = row.span;
    content = (
      <Cell colSpan={row.span} $head={c.tealLight}>
        <CellText $center>
          <Words text={row.title} />
        </CellText>
      </Cell>
    );
  } else if (row.labels || row.cells) {
    const list = row.labels || row.cells;
    const names = row.cells && row.cells.length === 3;
    used = list.length;
    content = list.map((text, i) => (
      <Cell key={i} $head={row.labels && c.teal} $alt={n % 2 === 0}>
        <CellText
          $center={row.cells && i > 0}
          $bold={row.bold && i > 0}
          $large={row.labels || (i === 0 && !names)}
        >
          <Words text={text} />
        </CellText>
      </Cell>
    ));
  }
  return (
    <tr style={{ height: rowHeight(n) }}>
      <RowHead scope="row" $on={n === 1}>{n}</RowHead>
      {content}
      {Array.from({ length: letters.length + 1 - used }, (_, i) => <Cell key={`e${i}`} />)}
    </tr>
  );
};

const hours = [
  ['Ola Hansen', 7.5],
  ['Kari Johansen', 12.5],
  ['Lars Pedersen', 10],
  ['Ingrid Nilsen', 7],
  ['Per Kristiansen', 7.5],
  ['Anne Larsen', 7],
  ['Bjørn Andersen', 0],
  ['Nina Haugen', 11],
];

const BarChart = () => {
  const bottom = 154.5;
  const unit = 111 / 14;
  return (
    <ChartFrame $top={65}>
      <svg width="388" height="233" viewBox="0 0 388 233">
        <text x="194" y="26" textAnchor="middle" fontSize="15" fontWeight="bold">Timer arbeidet per ansatt</text>
        {[0, 2, 4, 6, 8, 10, 12, 14].map(v => (
          <g key={v}>
            <path d={`M51 ${Math.floor(bottom - v * unit) + 0.5}H327`} stroke="#a9a9a9" />
            <text x="51" y={bottom - v * unit + 2} textAnchor="end">{v.toFixed(2)}</text>
          </g>
        ))}
        <path d="M53.500 43v112" stroke="#a9a9a9" />
        {hours.map(([name, value], i) => {
          const x = 71 + i * 34.15;
          return (
            <g key={name}>
              <rect
                x={x - 7}
                y={bottom - value * unit}
                width="14"
                height={value * unit}
                fill={c.teal}
                stroke="#e3f3f1"
              />
              <text transform={`translate(${x + 2} 162) rotate(-45)`} textAnchor="end">{name}</text>
            </g>
          );
        })}
        <text transform="translate(20 121) rotate(-90)" textAnchor="middle" fontWeight="bold">Timer</text>
        <text x="179" y="217" textAnchor="middle" fontWeight="bold">Ansatt</text>
        <path d="M338 114h5v5h-5z" fill={c.teal} />
        <text x="345" y="119">Sum timer</text>
      </svg>
    </ChartFrame>
  );
};

const types = [
  ['Normal', 6, '#4f81bd'],
  ['Overtid', 2, '#c0504d'],
  ['Ferie', 1, '#9bbb59'],
  ['Sykt', 1, '#8064a2'],
  ['Permisjon', 0, '#4bacc6'],
];

const PieChart = () => {
  const point = share => {
    const a = share * Math.PI * 2;
    return `${(119 + 84.5 * Math.sin(a)).toFixed(1)} ${(133.5 - 90.5 * Math.cos(a)).toFixed(1)}`;
  };
  let sum = 0;
  return (
    <ChartFrame $top={313}>
      <svg width="291" height="236" viewBox="0 0 291 236">
        <text x="145" y="26" textAnchor="middle" fontSize="15" fontWeight="bold">Fordeling av timetype</text>
        {types.map(([name, count, color], i) => {
          const from = sum / 10;
          sum += count;
          return (
            <g key={name}>
              {count > 0 && (
                <path
                  d={`M119 133.500L${point(from)}A84.500 90.500 0 ${count > 5 ? 1 : 0} 1 ${point(sum / 10)}Z`}
                  fill={color}
                />
              )}
              <rect x="241" y={90 + i * 11.5} width="5" height="5" fill={color} />
              <text x="249" y={95.5 + i * 11.5}>{name}</text>
            </g>
          );
        })}
      </svg>
    </ChartFrame>
  );
};

const menus = ['File', 'Edit', 'View', 'Insert', 'Format', 'Styles', 'Sheet', 'Data', 'Tools', 'Window', 'Help'];
const tabs = ['Timeregistrering', 'Ansatte', 'Dashboard', 'Veiledning'];
const decks = ['menu', 'properties', 'styles', 'gallery', 'navigator', 'fx'];

export default () => (
  <Window>
    <GlobalStyle />
    <MenuBar>
      {menus.map(name => <MenuItem key={name}>{name}</MenuItem>)}
      <CloseButton aria-label="Close document">
        <Icon name="close" size={14} />
      </CloseButton>
    </MenuBar>
    <Toolbar>
      <ToolGroups groups={standardTools} />
    </Toolbar>
    <Toolbar>
      <ComboBox label="Font name" value="Calibri" width={138} italic />
      <ComboBox label="Font size" value="16 pt" width={68} />
      <ToolGroups groups={formatTools} />
    </Toolbar>
    <Middle>
      <Work>
        <FormulaBar>
          <ComboBox label="Name box" value="A1:F1" width={108} />
          <FormulaTool aria-label="Function wizard"><Icon name="fx" size={14} /></FormulaTool>
          <FormulaTool aria-label="Sum"><Icon name="sum" size={14} /></FormulaTool>
          <Drop aria-label="Select function"><Caret /></Drop>
          <FormulaTool aria-label="Formula"><Icon name="equals" size={14} /></FormulaTool>
          <FormulaInput aria-label="Input line" defaultValue="DASHBOARD - TIMEREGNSKAP OVERSIKT" />
          <FormulaDrop aria-label="Expand formula bar"><Caret size={8} /></FormulaDrop>
        </FormulaBar>
        <SheetArea>
          <SheetView>
            <Sheet>
              <colgroup>
                <col style={{ width: 22 }} />
                {letters.map((l, i) => <col key={l} style={{ width: columnWidth(i) }} />)}
                <col />
              </colgroup>
              <thead>
                <tr>
                  <Corner />
                  {letters.map((l, i) => <ColHead key={l} scope="col" $on={i < 6}>{l}</ColHead>)}
                  <ColHead />
                </tr>
              </thead>
              <tbody>
                {Array.from({ length: 37 }, (_, i) => <SheetRow key={i} n={i + 1} />)}
              </tbody>
            </Sheet>
            <FillHandle />
            <BarChart />
            <PieChart />
          </SheetView>
          <VScroll>
            <VThumb />
          </VScroll>
        </SheetArea>
        <HScroll>
          <HThumb />
        </HScroll>
        <Tabs>
          {['first', 'prev', 'next', 'last'].map(name => (
            <TabNav key={name} aria-label={`${name} sheet`}>
              <Icon name={name} />
            </TabNav>
          ))}
          <AddTab aria-label="Add sheet"><Icon name="addSheet" /></AddTab>
          {tabs.map(name => <Tab key={name} $on={name === 'Dashboard'}>{name}</Tab>)}
        </Tabs>
      </Work>
      <Sidebar>
        {decks.map(name => (
          <SideButton key={name} aria-label={name}>
            <Icon name={name} />
          </SideButton>
        ))}
        <SideHandle aria-label="Hide sidebar">
          <Svg width="5" height="6" viewBox="0 0 5 6" aria-hidden="true">
            <path d="M1 1l3 2-3 2z" fill="#fff" />
          </Svg>
        </SideHandle>
      </Sidebar>
    </Middle>
    <StatusBar>
      <StatusCell $bare $pad={6}><Icon name="saved" size={12} /></StatusCell>
      <StatusCell $bare $pad={3}>Sheet 3 of 4</StatusCell>
      <StatusCell $pad={6}>Selected: 1 row, 6 columns</StatusCell>
      <StatusCell $pad={6}>PageStyle_Dashboard</StatusCell>
      <StatusCell $center>English (USA)</StatusCell>
      <StatusCell />
      <StatusCell $pad={6}>
        <Icon name="selection" size={14} />
        <Icon name="ibeam" size={14} />
      </StatusCell>
      <StatusCell />
      <StatusCell />
      <StatusCell $center>Average: ; Sum: 0</StatusCell>
      <StatusCell $pad={4}>
        <button aria-label="Zoom out"><Icon name="minus" size={10} /></button>
        <ZoomSlider aria-label="Zoom" />
        <button aria-label="Zoom in"><Icon name="plus" size={10} /></button>
        <ZoomValue>100%</ZoomValue>
      </StatusCell>
    </StatusBar>
  </Window>
);
